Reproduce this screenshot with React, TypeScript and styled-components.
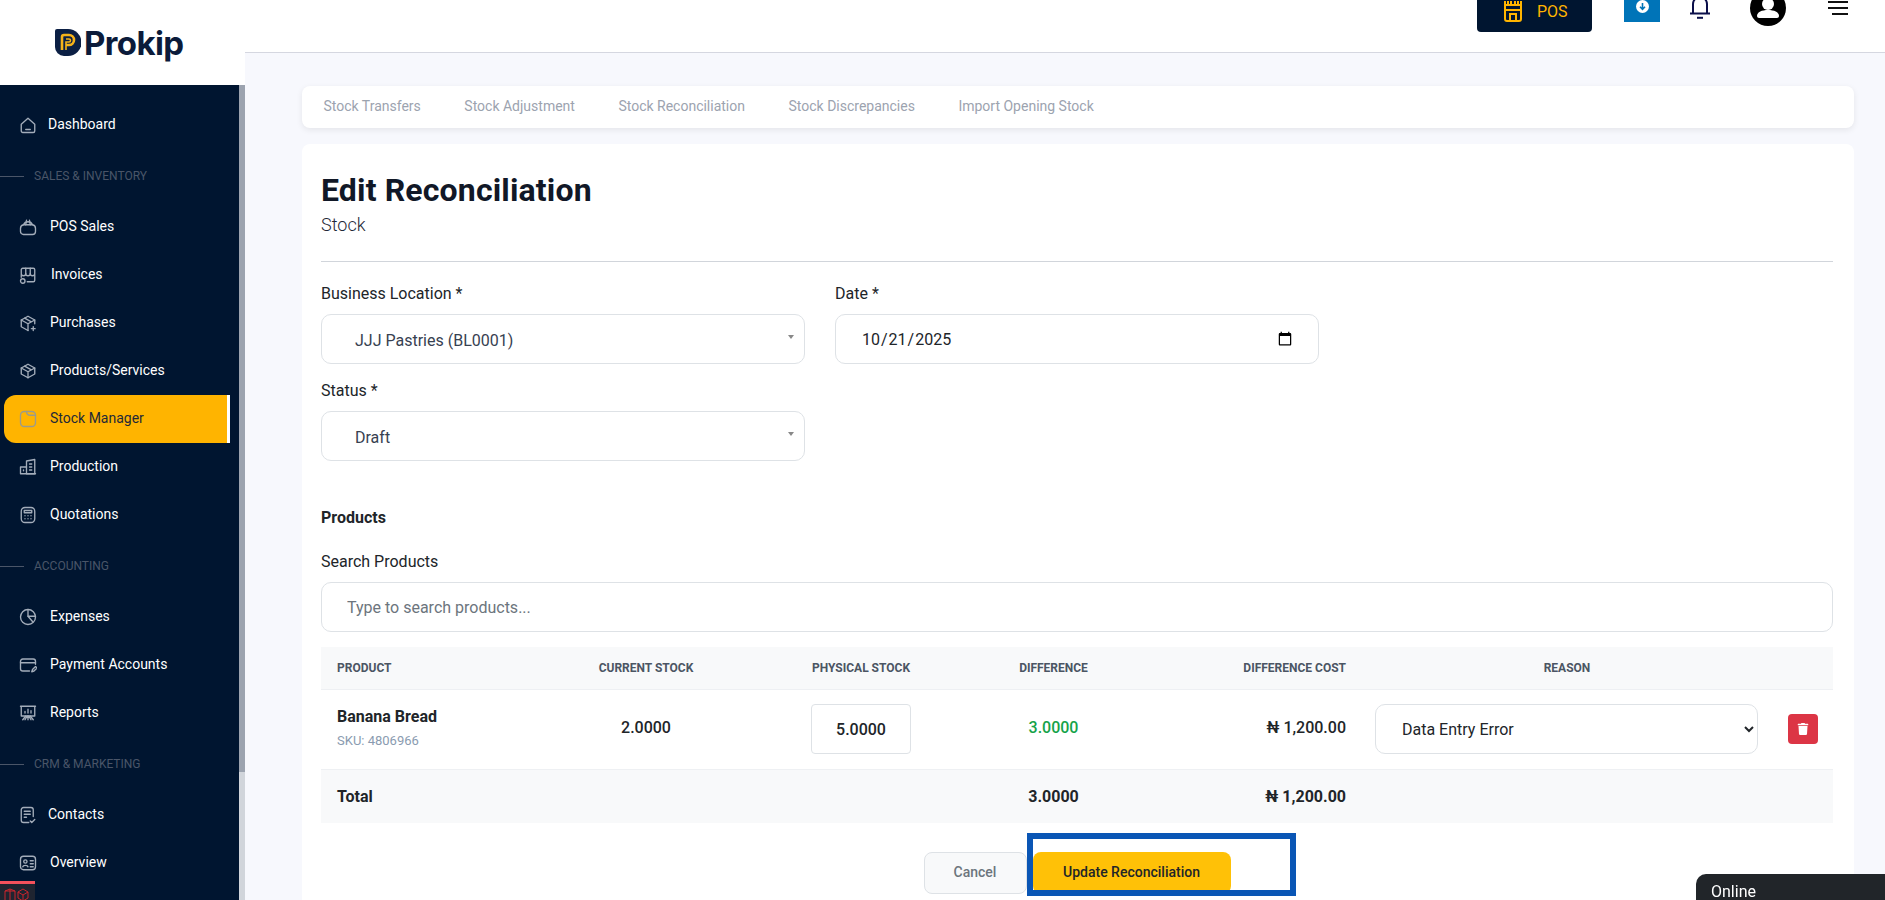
import { FC, ReactNode } from "react";
import styled, { createGlobalStyle } from "styled-components";
import { FaTrash } from "react-icons/fa";

const GlobalStyle = createGlobalStyle`
    * { box-sizing: border-box; }
    html, body {
        margin: 0;
        height: 100%;
        overflow: hidden;
        background: #f7f8fd;
        font-family: Roboto, "Liberation Sans", sans-serif;
        color: #212529;
    }
`
const Shell = styled.div`
    display: grid;
    grid-template-columns: 245px 1fr;
    height: 900px;
    overflow: hidden;
`
const Side = styled.aside`
    display: flex;
    flex-direction: column;
    height: 900px;
`
const LogoArea = styled.div`
    display: flex;
    align-items: center;
    gap: 3px;
    height: 85px;
    padding: 0 0 0 55px;
    background: #fff;
    flex: none;
`
const LogoText = styled.span`
    font-family: Inter, sans-serif;
    font-size: 33px;
    font-weight: 700;
    letter-spacing: -0.6px;
    color: #0b1b3a;
`
const SideBody = styled.div`
    display: flex;
    flex: 1;
    min-height: 0;
`
const Nav = styled.nav`
    flex: 1;
    padding: 16px 9px 0 4px;
    background: #001530;
`
const Track = styled.div`
    width: 6px;
    background: #d1d5db;
`
const Thumb = styled.div`
    height: 687px;
    background: #9ca3af;
`
const NavItem = styled.div<{ $active?: boolean; $textLeft?: number }>`
    display: flex;
    align-items: center;
    height: 48px;
    padding-left: 15px;
    font-size: 14px;
    color: ${p => (p.$active ? "#1f2937" : "#fff")};
    background: ${p => (p.$active ? "#ffb400" : "transparent")};
    border-right: 3px solid ${p => (p.$active ? "#fff" : "transparent")};
    border-radius: 12px 0 0 12px;

    svg {
        flex: none;
        width: 18px;
        height: 18px;
        color: ${p => (p.$active ? "#9b9b8c" : "#a3adba")};
    }
    span {
        margin-left: ${p => p.$textLeft ?? 13}px;
        margin-bottom: 3px;
    }
`
const NavSection = styled.div`
    display: flex;
    align-items: center;
    height: 54px;
    margin-left: -4px;
    font-size: 12px;
    color: #4a5568;

    &::before {
        content: "";
        width: 24px;
        height: 1px;
        margin-right: 10px;
        background: #4a5568;
    }
`
const Main = styled.main`
    min-width: 0;
    height: 900px;
    overflow: hidden;
`
const TopBar = styled.header`
    display: flex;
    justify-content: flex-end;
    align-items: flex-start;
    height: 53px;
    padding-right: 37px;
    background: #fff;
    border-bottom: 1px solid #d5d7e0;
    overflow: hidden;
`
const PosButton = styled.div`
    display: flex;
    align-items: center;
    gap: 14px;
    width: 115px;
    height: 50px;
    margin-top: -18px;
    padding: 9px 0 0 26px;
    background: #001530;
    border-radius: 4px;
    color: #ffb400;
    font-size: 16px;

    svg {
        margin-top: -3px;
    }
`
const DownloadBox = styled.div`
    display: flex;
    justify-content: center;
    align-items: flex-end;
    width: 36px;
    height: 40px;
    margin: -18px 0 0 32px;
    padding-bottom: 9px;
    background: #0074b8;
`
const BellWrap = styled.div`
    margin: -5px 0 0 30px;
    color: #0b0f4a;
    line-height: 0;
`
const AvatarWrap = styled.div`
    margin: -10px 0 0 40px;
    line-height: 0;
`
const Burger = styled.div`
    display: flex;
    flex-direction: column;
    align-items: flex-end;
    gap: 4px;
    width: 20px;
    margin: 1px 0 0 42px;
`
const BurgerLine = styled.i<{ $short?: boolean }>`
    display: block;
    width: ${p => (p.$short ? 16 : 20)}px;
    height: 2px;
    background: #111;
`
const Content = styled.div`
    padding: 33px 31px 0 57px;
`
const TabsCard = styled.div`
    display: flex;
    align-items: center;
    gap: 43.500px;
    height: 42px;
    padding: 0 21px 2px 21.500px;
    background: #fff;
    border-radius: 8px;
    box-shadow: 0 2px 6px rgba(0, 0, 0, 0.08);
`
const Tab = styled.span`
    font-size: 14px;
    color: #9ca3af;
`
const Card = styled.section`
    margin-top: 16px;
    padding: 20px 21px 20px 19px;
    background: #fff;
    border-radius: 8px;
`
const Title = styled.h1`
    margin: 8px 0 0;
    font-size: 32px;
    line-height: 36px;
    font-weight: 700;
    letter-spacing: 0.15px;
    color: #111827;
`
const Sub = styled.p`
    margin: 5px 0 0;
    font-size: 18px;
    line-height: 24px;
    font-weight: 300;
    color: #1f2937;
`
const Divider = styled.hr`
    margin: 24px 0 0;
    border: 0;
    border-top: 1px solid #d1d5db;
`
const FormGrid = styled.div`
    display: grid;
    grid-template-columns: 484px 484px;
    gap: 17px 30px;
    margin-top: 22px;
`
const Label = styled.label`
    display: block;
    font-size: 16px;
    line-height: 20px;
    color: #212529;
`
const FakeSelect = styled.div`
    display: flex;
    align-items: center;
    justify-content: space-between;
    height: 50px;
    margin-top: 10px;
    padding: 3px 10px 0 33px;
    font-size: 16px;
    color: #374151;
    border: 1px solid #dee2e6;
    border-radius: 10px;

    &::after {
        content: "";
        margin-top: -7px;
        border: 3px solid transparent;
        border-top: 4px solid #888;
        border-bottom: 0;
    }
`
const DateInput = styled.input`
    display: block;
    width: 100%;
    height: 50px;
    margin-top: 10px;
    padding: 0 23px 0 25px;
    font: 16px Roboto, sans-serif;
    color: #212529;
    border: 1px solid #dee2e6;
    border-radius: 10px;
    background: #fff;
`
const SectionTitle = styled.div`
    margin-top: 47px;
    font-size: 16px;
    line-height: 20px;
    font-weight: 700;
    color: #212529;
`
const SearchLabel = styled(Label)`
    margin-top: 24px;
`
const SearchInput = styled.input`
    display: block;
    width: 100%;
    height: 50px;
    margin-top: 10px;
    padding: 0 25px;
    font: 16px Roboto, sans-serif;
    border: 1px solid #dee2e6;
    border-radius: 10px;

    &::placeholder { color: #6c757d; }
`
const Table = styled.table`
    width: 1512px;
    margin-top: 15px;
    border-collapse: collapse;
    table-layout: fixed;
`
const Th = styled.th<{ $align?: string }>`
    height: 42px;
    padding: 0 16px;
    text-align: ${p => p.$align ?? "center"};
    font-size: 12px;
    font-weight: 700;
    color: #4b5563;
    text-transform: uppercase;
    background: #f8f9fa;
`
const Td = styled.td<{ $align?: string; $color?: string; $flush?: boolean }>`
    height: 80px;
    padding: 0 16px ${p => (p.$flush ? 0 : 4)}px;
    text-align: ${p => p.$align ?? "center"};
    font-size: 16px;
    font-weight: 500;
    color: ${p => p.$color ?? "#212529"};
    border-top: 1px solid #eef0f3;
    border-bottom: 1px solid #eef0f3;
`
const TotalTd = styled.td<{ $align?: string }>`
    height: 54px;
    padding: 0 16px;
    text-align: ${p => p.$align ?? "center"};
    font-size: 16px;
    font-weight: 700;
    color: #212529;
    background: #f8f9fa;
`
const ProductName = styled.div`
    font-weight: 700;
    line-height: 22px;
    margin-top: -1px;
`
const Sku = styled.div`
    margin-top: 5px;
    font-size: 13px;
    font-weight: 400;
    color: #8a9bb0;
`
const QtyInput = styled.input`
    display: block;
    width: 100px;
    height: 50px;
    margin: 0 auto;
    text-align: center;
    font: 500 16px Roboto, sans-serif;
    color: #212529;
    border: 1px solid #dee2e6;
    border-radius: 4px;
`
const ReasonSelect = styled.select`
    display: block;
    width: 383px;
    height: 50px;
    margin-left: -3px;
    padding: 0 4px 0 22px;
    font: 16px Roboto, sans-serif;
    color: #212529;
    background: #fff;
    border: 1px solid #dee2e6;
    border-radius: 10px;
`
const DeleteButton = styled.button`
    display: flex;
    align-items: center;
    justify-content: center;
    width: 30px;
    height: 30px;
    padding: 0;
    color: #fff;
    font-size: 12px;
    background: #dc3545;
    border: 0;
    border-radius: 4px;
`
const ButtonRow = styled.div`
    display: flex;
    justify-content: center;
    gap: 6px;
    margin-top: 29px;
`
const CancelButton = styled.button`
    width: 103px;
    height: 42px;
    padding-bottom: 3px;
    font: 500 14px Roboto, sans-serif;
    color: #6c757d;
    background: #f8f9fa;
    border: 1px solid #dee2e6;
    border-radius: 8px;
`
const UpdateWrap = styled.div`
    position: relative;
`
const UpdateButton = styled.button`
    display: block;
    width: 198px;
    height: 42px;
    padding-bottom: 3px;
    font: 500 14px Roboto, sans-serif;
    color: #212529;
    background: #ffc107;
    border: 0;
    border-radius: 8px;
`
const Highlight = styled.div`
    position: absolute;
    left: -6px;
    top: -19px;
    width: 269px;
    height: 63px;
    border: 6px solid #0a56b5;
    pointer-events: none;
`
const OnlineChip = styled.div`
    position: fixed;
    right: 0;
    bottom: 0;
    width: 189px;
    height: 26px;
    padding: 8px 0 0 15px;
    font-size: 16px;
    line-height: 20px;
    color: #fff;
    background: #212529;
    border-radius: 10px 0 0 0;
`
const DebugTab = styled.div`
    position: fixed;
    left: 0;
    bottom: 0;
    display: flex;
    gap: 1px;
    width: 35px;
    height: 19px;
    padding: 4px 0 0 4px;
    color: #c8252c;
    background: #1f2430;
    border-top: 3px solid #f4515c;
    line-height: 0;
`

const Icon: FC<{ children: ReactNode }> = ({ children }) => (
    <svg viewBox="0 0 24 24" fill="none" stroke="currentColor" strokeWidth="1.8" strokeLinecap="round" strokeLinejoin="round">
        {children}
    </svg>
)

const icons: Record<string, ReactNode> = {
    home: <><path d="M3 11l9-8 9 8v9a2 2 0 0 1-2 2H5a2 2 0 0 1-2-2z" /><path d="M9 18h6" /></>,
    pos: <><path d="M2 14a5 5 0 0 1 4-5h12a5 5 0 0 1 4 5v4a4 4 0 0 1-4 4H6a4 4 0 0 1-4-4z" /><path d="M6 9a6.5 6.5 0 0 1 12 0" /><path d="M10 3l-1 6M14 3l1 6" /></>,
    store: <><path d="M5 3h14a2 2 0 0 1 2 2v5a3 3 0 0 1-6 0 3 3 0 0 1-6 0 3 3 0 0 1-6 0V5a2 2 0 0 1 2-2z" /><path d="M9 3v7M15 3v7M21 12v7a2 2 0 0 1-2 2h-8M3 12v3" /><circle cx="5" cy="20" r="3" /></>,
    boxPlus: <><path d="M21 13V8l-9-5-9 5v9l9 5" /><path d="M3 8l9 5 9-5M12 13v9M7.5 5.5l9 5" /><path d="M19 17v5M16.5 19.5h5" /></>,
    box: <><path d="M21 8l-9-5-9 5v8l9 5 9-5z" /><path d="M3 8l9 5 9-5M12 13v8M7.5 5.5l9 5" /></>,
    folder: <><rect x="2" y="2" width="20" height="20" rx="5" /><path d="M10 2c0 4 2 5 5 5h7" /></>,
    building: <><path d="M10 21V4l11-2v19z" /><path d="M2 21v-9h8M2 21h20M14 8h3M14 12h3M14 16h3M6 16v1" /></>,
    calc: <><rect x="3" y="2" width="18" height="20" rx="5" /><rect x="7" y="6" width="10" height="3" /><path d="M8 13h0M12 13h0M16 13h0M8 17h0M12 17h0M16 17h0" /></>,
    pie: <><circle cx="12" cy="12" r="10" /><path d="M12 2v9l6 7" /><path d="M12 11h10" /></>,
    card: <><path d="M22 11V7a3 3 0 0 0-3-3H5a3 3 0 0 0-3 3v10a3 3 0 0 0 3 3h9" /><path d="M2 9h20" /><path d="M17 21l1-3 4-4 2 2-4 4z" /></>,
    board: <><path d="M2 3h20M3 3v13h18V3" /><path d="M8 12v-2M12 12V7M16 12V9" /><path d="M12 16v5M8 21l3-5M16 21l-3-5M5 21l4-5M19 21l-4-5" /></>,
    note: <><path d="M13 22H6a3 3 0 0 1-3-3V5a3 3 0 0 1 3-3h10a3 3 0 0 1 3 3v9" /><path d="M7 7h8M7 11h8M7 15h3" /><path d="M15 20l2 2 4-4" /></>,
    idCard: <><rect x="2" y="3" width="20" height="18" rx="4" /><circle cx="8.5" cy="10" r="2.2" /><path d="M5 17c.5-2.5 6.5-2.5 7 0M15 9h4M15 13h4M15 17h4" /></>,
}

const Item: FC<{ icon: string; label: string; active?: boolean; textLeft?: number }> = ({ icon, label, active, textLeft }) => (
    <NavItem $active={active} $textLeft={textLeft}>
        <Icon>{icons[icon]}</Icon>
        <span>{label}</span>
    </NavItem>
)

const App: FC = () => {
    return (
        <Shell>
            <GlobalStyle />
            <Side>
                <LogoArea>
                    <svg width="26" height="27" viewBox="0 0 26 27">
                        <path d="M2 0h11a13 13 0 0 1 0 27H9a9 9 0 0 1-9-9V2a2 2 0 0 1 2-2z" fill="#0b1f44" />
                        <path d="M7 21V8a2 2 0 0 1 2-2h5a5 5 0 0 1 0 10h-3" fill="none" stroke="#f5b21a" strokeWidth="2.6" />
                        <path d="M11 21v-8h3a1.500 1.500 0 0 0 0-3h-3" fill="none" stroke="#f5b21a" strokeWidth="1.6" />
                    </svg>
                    <LogoText>Prokip</LogoText>
                </LogoArea>
                <SideBody>
                    <Nav>
                        <Item icon="home" label="Dashboard" textLeft={11} />
                        <NavSection>SALES &amp; INVENTORY</NavSection>
                        <Item icon="pos" label="POS Sales" />
                        <Item icon="store" label="Invoices" textLeft={14} />
                        <Item icon="boxPlus" label="Purchases" />
                        <Item icon="box" label="Products/Services" />
                        <Item icon="folder" label="Stock Manager" active />
                        <Item icon="building" label="Production" />
                        <Item icon="calc" label="Quotations" />
                        <NavSection>ACCOUNTING</NavSection>
                        <Item icon="pie" label="Expenses" />
                        <Item icon="card" label="Payment Accounts" />
                        <Item icon="board" label="Reports" />
                        <NavSection>CRM &amp; MARKETING</NavSection>
                        <Item icon="note" label="Contacts" textLeft={11} />
                        <Item icon="idCard" label="Overview" />
                    </Nav>
                    <Track><Thumb /></Track>
                </SideBody>
            </Side>

            <Main>
                <TopBar>
                    <PosButton>
                        <svg width="20" height="26" viewBox="0 0 20 26" fill="none" stroke="currentColor" strokeWidth="2">
                            <path d="M2 4v4h3V4M2 8h16M8 4v4h4V4M15 4v4h3V4M2 8v14a2 2 0 0 0 2 2h12a2 2 0 0 0 2-2V8" />
                            <path d="M2 13h16M7 24v-7h6v7" />
                        </svg>
                        POS
                    </PosButton>
                    <DownloadBox>
                        <svg width="13" height="13" viewBox="0 0 13 13">
                            <circle cx="6.500" cy="6.500" r="6.500" fill="#fff" />
                            <path d="M6.500 3v6M4 6.800l2.500 2.500L9 6.800" fill="none" stroke="#0074b8" strokeWidth="1.600" />
                        </svg>
                    </DownloadBox>
                    <BellWrap>
                        <svg width="20" height="24" viewBox="0 0 20 24" fill="none" stroke="currentColor" strokeWidth="2">
                            <path d="M0 18.500h20M3 18.500V9a7 7 0 0 1 14 0v9.500" />
                            <path d="M7 22.800h6" />
                        </svg>
                    </BellWrap>
                    <AvatarWrap>
                        <svg width="36" height="36" viewBox="0 0 36 36">
                            <circle cx="18" cy="18" r="18" fill="#000" />
                            <circle cx="18" cy="14" r="6" fill="#fff" />
                            <path d="M7 26c0-4 5-6 11-6s11 2 11 6c0 1-1 2-2 2H9c-1 0-2-1-2-2z" fill="#fff" />
                        </svg>
                    </AvatarWrap>
                    <Burger>
                        <BurgerLine />
                        <BurgerLine />
                        <BurgerLine $short />
                    </Burger>
                </TopBar>

                <Content>
                    <TabsCard>
                        <Tab>Stock Transfers</Tab>
                        <Tab>Stock Adjustment</Tab>
                        <Tab>Stock Reconciliation</Tab>
                        <Tab>Stock Discrepancies</Tab>
                        <Tab>Import Opening Stock</Tab>
                    </TabsCard>

                    <Card>
                        <Title>Edit Reconciliation</Title>
                        <Sub>Stock</Sub>
                        <Divider />

                        <FormGrid>
                            <div>
                                <Label>Business Location *</Label>
                                <FakeSelect>JJJ Pastries (BL0001)</FakeSelect>
                            </div>
                            <div>
                                <Label>Date *</Label>
                                <DateInput type="date" defaultValue="2025-10-21" />
                            </div>
                            <div>
                                <Label>Status *</Label>
                                <FakeSelect>Draft</FakeSelect>
                            </div>
                        </FormGrid>

                        <SectionTitle>Products</SectionTitle>
                        <SearchLabel>Search Products</SearchLabel>
                        <SearchInput placeholder="Type to search products..." />

                        <Table>
                            <colgroup>
                                <col width="219" />
                                <col width="212" />
                                <col width="218" />
                                <col width="167" />
                                <col width="225" />
                                <col width="410" />
                                <col width="61" />
                            </colgroup>
                            <thead>
                                <tr>
                                    <Th $align="left">Product</Th>
                                    <Th>Current Stock</Th>
                                    <Th>Physical Stock</Th>
                                    <Th>Difference</Th>
                                    <Th $align="right">Difference Cost</Th>
                                    <Th>Reason</Th>
                                    <Th />
                                </tr>
                            </thead>
                            <tbody>
                                <tr>
                                    <Td $align="left">
                                        <ProductName>Banana Bread</ProductName>
                                        <Sku>SKU: 4806966</Sku>
                                    </Td>
                                    <Td>2.0000</Td>
                                    <Td $flush><QtyInput defaultValue="5.0000" /></Td>
                                    <Td $color="#16a34a">3.0000</Td>
                                    <Td $align="right">₦ 1,200.00</Td>
                                    <Td $flush>
                                        <ReasonSelect defaultValue="data">
                                            <option value="data">Data Entry Error</option>
                                        </ReasonSelect>
                                    </Td>
                                    <Td $flush><DeleteButton><FaTrash /></DeleteButton></Td>
                                </tr>
                                <tr>
                                    <TotalTd $align="left">Total</TotalTd>
                                    <TotalTd />
                                    <TotalTd />
                                    <TotalTd>3.0000</TotalTd>
                                    <TotalTd $align="right">₦ 1,200.00</TotalTd>
                                    <TotalTd />
                                    <TotalTd />
                                </tr>
                            </tbody>
                        </Table>

                        <ButtonRow>
                            <CancelButton>Cancel</CancelButton>
                            <UpdateWrap>
                                <UpdateButton>Update Reconciliation</UpdateButton>
                                <Highlight />
                            </UpdateWrap>
                        </ButtonRow>
                    </Card>
                </Content>
            </Main>

            <DebugTab>
                <svg width="12" height="14" viewBox="0 0 12 14" fill="none" stroke="currentColor">
                    <path d="M1 14V3l5-2 5 2v11M1 3h10M6 1v13" />
                </svg>
                <svg width="12" height="14" viewBox="0 0 12 14" fill="none" stroke="currentColor">
                    <path d="M1 4l5-3 5 3v6l-5 3-5-3zM1 4l5 3 5-3M6 7v6" />
                </svg>
            </DebugTab>
            <OnlineChip>Online</OnlineChip>
        </Shell>
    )
}

export default App;
